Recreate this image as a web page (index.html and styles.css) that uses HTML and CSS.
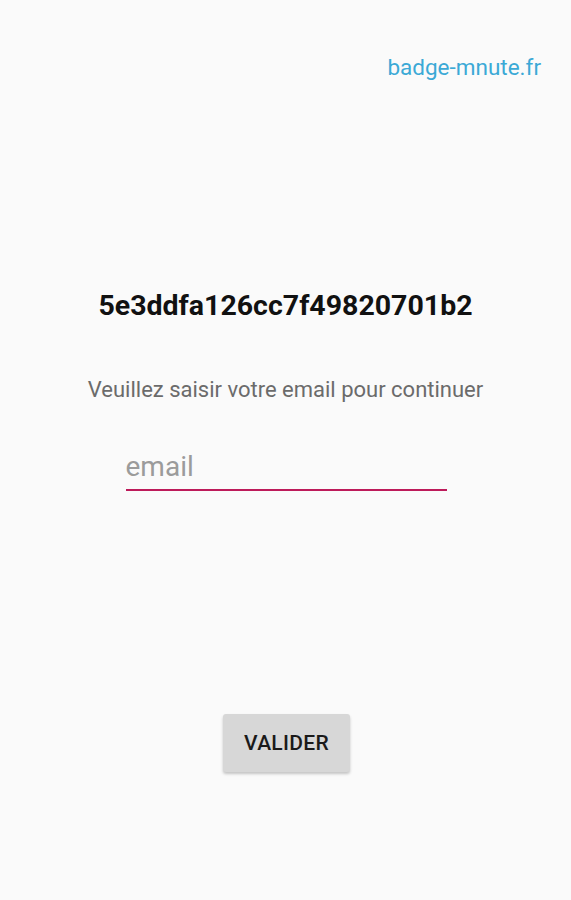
FILE: index.html
```html
<!DOCTYPE html>
<html>
<head>
<meta charset="utf-8">
<link rel="stylesheet" href="styles.css">
</head>
<body>
<div class="screen">
  <header class="top">
    <a class="site-link" href="#">badge-mnute.fr</a>
  </header>
  <main class="content">
    <h1 class="badge-id">5e3ddfa126cc7f49820701b2</h1>
    <p class="prompt">Veuillez saisir votre email pour continuer</p>
    <div class="field">
      <input class="email-input" type="text" placeholder="email">
    </div>
    <button class="submit">VALIDER</button>
  </main>
</div>
</body>
</html>
```
FILE: styles.css
```css
html, body {
  margin: 0;
  padding: 0;
  background: #fafafa;
}
body {
  font-family: Roboto, "Noto Sans", sans-serif;
}
.screen {
  width: 571px;
  height: 900px;
  display: flex;
  flex-direction: column;
}
.top {
  display: flex;
  justify-content: flex-end;
  padding: 53px 30px 0 0;
}
.site-link {
  color: #3ba9d6;
  font-size: 22.5px;
  line-height: 28px;
  text-decoration: none;
}
.content {
  display: flex;
  flex-direction: column;
  align-items: center;
}
.badge-id {
  margin: 207px 0 0 0;
  font-size: 28.5px;
  line-height: 36px;
  font-weight: 700;
  color: #111;
}
.prompt {
  margin: 51px 0 0 0;
  font-size: 22px;
  line-height: 30px;
  color: #6b6b6b;
}
.field {
  margin-top: 40px;
  width: 321px;
  margin-left: 1px;
}
.email-input {
  box-sizing: border-box;
  width: 100%;
  border: none;
  border-bottom: 2.5px solid #bd1a5a;
  background: transparent;
  font-family: Roboto, "Noto Sans", sans-serif;
  font-size: 28px;
  line-height: 36px;
  height: 46px;
  padding: 3px 0 5px 0;
  outline: none;
  color: #333;
}
.email-input::placeholder {
  color: #9b9b9b;
}
.submit {
  margin-top: 223px;
  width: 127px;
  height: 58px;
  border: none;
  border-radius: 3px;
  background: #d7d7d7;
  box-shadow: 0 2px 3px rgba(0,0,0,0.22);
  font-family: Roboto, "Noto Sans", sans-serif;
  font-size: 21px;
  font-weight: 500;
  letter-spacing: 0.3px;
  color: #1a1a1a;
  margin-left: 2px;
  padding: 0;
}
```
